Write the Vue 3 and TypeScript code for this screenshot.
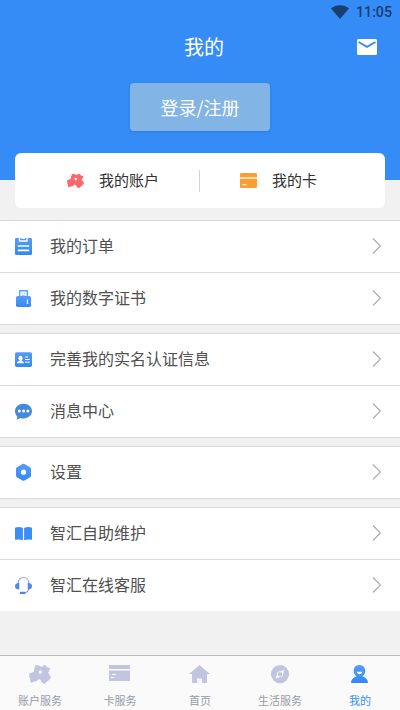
<script setup lang="ts">
interface Row { icon: string; label: string }
interface Tab { icon: string; label: string; active?: boolean }

const groups: Row[][] = [
  [{ icon: 'order', label: '我的订单' }, { icon: 'cert', label: '我的数字证书' }],
  [{ icon: 'identity', label: '完善我的实名认证信息' }, { icon: 'message', label: '消息中心' }],
  [{ icon: 'settings', label: '设置' }],
  [{ icon: 'book', label: '智汇自助维护' }, { icon: 'headset', label: '智汇在线客服' }],
]

const tabs: Tab[] = [
  { icon: 'account', label: '账户服务' },
  { icon: 'card', label: '卡服务' },
  { icon: 'home', label: '首页' },
  { icon: 'life', label: '生活服务' },
  { icon: 'me', label: '我的', active: true },
]
</script>

<template>
  <main class="screen">
    <svg class="defs" width="0" height="0">
      <defs>
        <linearGradient id="blue" x1="0" y1="0" x2="0" y2="1">
          <stop offset="0" stop-color="#559df5" /><stop offset="1" stop-color="#3488f5" />
        </linearGradient>
        <symbol id="puzzle" viewBox="0 0 66 57">
          <path fill-rule="evenodd" d="M16 10 20 1 26 0 34 4 39 5 45 0 52 3 54 7 64 9 61 17 57 23 66 37 62 43 46 57 38 52 35 45 29 42 23 48 5 53 0 29 2 25 15 20ZM34 16a5 5 0 1 0 0 10a5 5 0 1 0 0-10Z" />
        </symbol>
      </defs>
    </svg>

    <header class="hero">
      <div class="status">
        <svg class="wifi" viewBox="0 0 18 14"><path d="M0 3.500C5-1 13-1 18 3.500L9 14Z" /></svg>
        <span>11:05</span>
      </div>
      <div class="titlebar">
        <span class="side" />
        <h1>我的</h1>
        <span class="side">
          <svg class="mail" viewBox="0 0 20 16">
            <rect width="20" height="16" rx="1.500" fill="#fff" />
            <path d="M1.500 3 10 7.800 18.500 3" fill="none" stroke="#398df5" stroke-width="2" />
          </svg>
        </span>
      </div>
      <button class="login" type="button">登录/注册</button>
    </header>

    <section class="quick">
      <div class="quick-item mine">
        <svg class="q-puzzle"><use href="#puzzle" /></svg><span>我的账户</span>
      </div>
      <div class="quick-item cards">
        <svg class="q-card" viewBox="0 0 17 15">
          <rect width="17" height="15" rx="1.200" fill="#fd9d33" />
          <rect y="4" width="17" height="2" fill="#ffe2aa" />
          <rect x="2.500" y="11" width="4" height="1.200" fill="#fff" />
        </svg><span>我的卡</span>
      </div>
    </section>

    <section v-for="(group, i) in groups" :key="i" class="group">
      <div v-for="row in group" :key="row.label" class="row">
        <svg class="row-icon" viewBox="-.5 -.5 18 18">
          <g v-if="row.icon === 'order'">
            <rect x=".5" y=".5" width="17" height="17" rx="1.300" fill="url(#blue)" />
            <path d="M5 0V3.500H12.500V0" fill="none" stroke="#fff" stroke-width="1.300" />
            <path d="M4 8.500H14M4 12.900H14" stroke="#fff" stroke-width="1.700" stroke-linecap="round" />
            <path d="M7 .8H10.500" stroke="#fff" stroke-width="1.200" />
          </g>
          <g v-else-if="row.icon === 'cert'">
            <path d="M5.200 7V1.200H12.800V7" fill="none" stroke="#5ba3f8" stroke-width="1.400" />
            <path d="M7.400 3.800H8.400M9.600 3.800H10.600M7.300 5.800H10.700" stroke="#8cbcf8" stroke-width="1" />
            <rect x="1.500" y="6.500" width="15" height="11" rx="1.700" fill="url(#blue)" />
            <path d="M13 10V14.500" stroke="#fff" stroke-width="1.300" />
          </g>
          <g v-else-if="row.icon === 'identity'">
            <rect x=".5" y="1.700" width="17" height="14.700" rx="1.700" fill="url(#blue)" />
            <ellipse cx="6" cy="7.700" rx="2" ry="2.400" fill="#fff" />
            <path d="M5 9H7V10.300L9.200 11.400V12.700H2.500V11.400L5 10.300Z" fill="#fff" />
            <path d="M10.500 6.500H13.600M10.500 9H15.300M10.500 11.600H15.300" stroke="#fff" stroke-width="1" />
          </g>
          <g v-else-if="row.icon === 'message'">
            <path d="M9 1.200C4 1.200.500 4.500.500 8.600C.500 11 1.500 12.800 2.800 14L2.200 17.200 5.900 15.400C12 17.300 17.500 13.800 17.500 8.600C17.500 4.500 14 1.200 9 1.200Z" fill="#4489dc" />
            <g fill="#fff"><circle cx="4.800" cy="8.500" r="1.500" /><circle cx="9.100" cy="8.500" r="1.500" /><circle cx="13.400" cy="8.500" r="1.500" /></g>
          </g>
          <g v-else-if="row.icon === 'settings'">
            <path d="M8 .5Q9 0 10 .5L15.600 3.800Q16.500 4.300 16.500 5.300V12.100Q16.500 13.100 15.600 13.700L10 17Q9 17.500 8 17L2.400 13.700Q1.500 13.100 1.500 12.100V5.300Q1.500 4.300 2.400 3.800Z" fill="url(#blue)" />
            <circle cx="9" cy="8.700" r="2.600" fill="#fff" />
          </g>
          <g v-else-if="row.icon === 'book'" fill="#398ff6">
            <path d="M.5 3.200Q4.600 1.700 8.400 3.400V15.700Q5 14.500.500 15.300Z" />
            <path d="M17.500 3.200Q13.400 1.700 9.600 3.400V15.700Q13 14.500 17.500 15.300Z" />
          </g>
          <g v-else>
            <path d="M3.400 8.500V7.500C3.400-1.200 14.600-1.200 14.600 7.500V8.500M14.500 12Q14 15.500 9.500 16.700" fill="none" stroke="#81a9ee" stroke-width="1.200" />
            <path d="M4.800 6.500V13H3.600Q.500 12.500.500 9.800Q.500 7 3.500 6.500ZM13.200 6.500V13H14.400Q17.500 12.500 17.500 9.800Q17.500 7 14.500 6.500Z" fill="#5687ec" />
            <rect x="5.200" y="15.200" width="5.800" height="2.300" rx="1.100" fill="#4686ed" />
          </g>
        </svg>
        <span class="label">{{ row.label }}</span>
        <svg class="arrow" viewBox="0 0 10 18"><path d="M1 1.500 8.400 9 1 16.500" /></svg>
      </div>
    </section>

    <nav class="tabs">
      <div v-for="tab in tabs" :key="tab.label" class="tab" :class="{ active: tab.active }">
        <svg class="tab-icon" viewBox="0 0 22 20">
          <use v-if="tab.icon === 'account'" href="#puzzle" width="22" height="19" />
          <g v-else-if="tab.icon === 'card'">
            <path d="M0 0H21V4H0ZM0 5.500H21V16H0Z" />
            <path d="M3 9.500H7M2 12.500H5.500" stroke="#fff" stroke-width="1" />
          </g>
          <path v-else-if="tab.icon === 'home'" d="M10.500 0 21 9H18V18H13V13.500H8V18H3V9H0Z" />
          <g v-else-if="tab.icon === 'life'">
            <circle cx="11" cy="9.100" r="9.100" />
            <path fill="#fafafb" fill-rule="evenodd" d="M15.200 5 13.600 11.300 6.800 13.400 8.400 7.100ZM11 7a2.200 2.200 0 1 0 0 4.400a2.200 2.200 0 1 0 0-4.400Z" />
          </g>
          <g v-else fill="url(#blue)" transform="translate(-.5 0)">
            <path d="M11 0C7 0 5 2.900 5.200 6.500C5.400 8.700 6.800 10.500 8.200 11.300C4.700 12.300 2.500 14.500 2.500 18H19.500C19.500 14.500 17.300 12.300 13.800 11.300C15.200 10.500 16.600 8.700 16.800 6.500C17 2.900 15 0 11 0Z" />
            <path d="M8.200 6.800H13.800Q13.100 9.300 11 9.300T8.200 6.800Z" fill="#fff" />
          </g>
        </svg>
        <span>{{ tab.label }}</span>
      </div>
    </nav>
  </main>
</template>

<style>
body { margin: 0; background: #f1f1f1; }
</style>

<style scoped>
.screen { display: flex; flex-direction: column; height: 710px; overflow: hidden; background: #f1f1f1; font-family: "Noto Sans CJK SC", sans-serif; }
.defs { position: absolute; }
svg { display: block; flex: none; }
.hero { display: flex; flex-direction: column; align-items: center; flex: none; height: 180px; background: #368cf6; }
.status { display: flex; align-items: center; justify-content: flex-end; gap: 7px; box-sizing: border-box; width: 100%; height: 24px; padding: 1px 8px 0 0; color: #173f70; font: 500 14.200px/23px Roboto, sans-serif; }
.wifi { width: 18px; height: 14px; margin-bottom: 1px; fill: #173f70; }
.titlebar { display: flex; align-items: center; justify-content: space-between; box-sizing: border-box; width: 100%; height: 45px; padding: 0 23px; }
.side { width: 20px; }
.mail { width: 20px; height: 16px; }
h1 { margin: 0; padding-left: 8px; color: #fff; font-size: 20px; font-weight: 400; line-height: 45px; }
.login { width: 140px; height: 48px; margin-top: 14px; padding: 0; border: 0; border-radius: 4px; background: #82b4e5; box-shadow: 0 1px 3px #236dc580; color: #fff; font: 400 18px/48px "Noto Sans CJK SC", sans-serif; }
.quick { display: flex; align-items: center; flex: none; height: 55px; margin: -27px 15px 12px; border-radius: 6px; background: #fff; color: #303030; font-size: 15px; line-height: 22px; }
.quick-item { display: flex; align-items: center; box-sizing: border-box; height: 22px; }
.quick-item span { padding-bottom: 2px; }
.mine { width: 185px; padding-left: 52px; gap: 15px; border-right: 1px solid #d0d0d0; }
.cards { padding-left: 40px; gap: 15px; }
.q-puzzle { width: 17px; height: 16px; fill: #fc6869; }
.q-card { width: 17px; height: 15px; }
.group { flex: none; margin-bottom: 8px; border-top: 1px solid #dadada; background: #fff; }
.row { display: flex; align-items: center; box-sizing: border-box; height: 52px; padding: 0 18px 2px 14px; border-bottom: 1px solid #dadada; }
.group:last-of-type .row:last-child { border-bottom-color: #f1f1f1; }
.row-icon { width: 18px; height: 18px; margin-top: 1px; overflow: visible; }
.label { flex: 1; margin-left: 18px; padding-bottom: 1px; color: #505050; font-size: 16px; line-height: 24px; }
.arrow { width: 10px; height: 18px; fill: none; stroke: #aaa; stroke-width: 1.100; }
.tabs { display: flex; flex: none; box-sizing: border-box; height: 55px; margin-top: auto; border-top: 1px solid #bbb; background: #fafafa; }
.tab { display: flex; flex: 1; flex-direction: column; align-items: center; padding-top: 9px; color: #969aa5; font-size: 11px; line-height: 16px; gap: 7px; }
.tab-icon { width: 22px; height: 20px; fill: #c2c5df; }
.active { color: #398ef6; }
</style>
